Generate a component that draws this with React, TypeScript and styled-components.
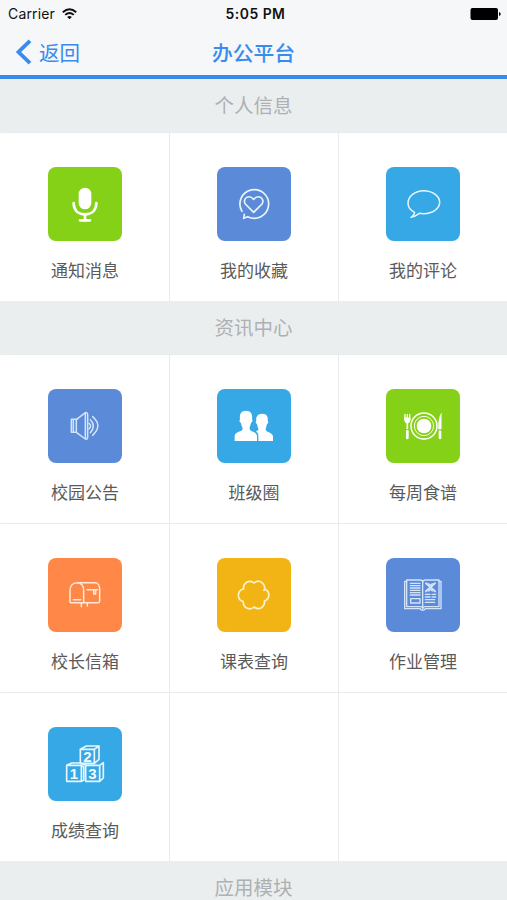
import React from "react";
import styled, { createGlobalStyle } from "styled-components";

const GlobalStyle = createGlobalStyle`
  * { box-sizing: border-box; }
  html, body { margin: 0; padding: 0; }
  body {
    background: #ffffff;
    overflow: hidden;
    font-family: "Noto Sans CJK SC", "Noto Sans", sans-serif;
  }
`;

const Screen = styled.div`
  width: 507px;
  height: 900px;
  overflow: hidden;
  background: #ffffff;
`;

const Header = styled.header`
  height: 79px;
  background: #f6f7f8;
  border-bottom: 4px solid #3b8ae6;
`;

const StatusBar = styled.div`
  height: 28px;
  display: grid;
  grid-template-columns: 1fr auto 1fr;
  align-items: center;
  padding: 0 6px 0 8px;
  color: #111111;
  font-family: Inter, sans-serif;
  line-height: 28px;
`;

const Carrier = styled.div`
  display: flex;
  align-items: center;
  gap: 7px;
  font-size: 14px;
  letter-spacing: 0.15px;
`;

const Clock = styled.div`
  font-size: 13.9px;
  font-weight: 600;
  letter-spacing: 0.5px;
  padding-left: 2px;
`;

const BatterySlot = styled.div`
  display: flex;
  justify-content: flex-end;
`;

const NavBar = styled.nav`
  height: 47px;
  display: grid;
  grid-template-columns: 1fr auto 1fr;
  align-items: center;
  padding: 0 15px;
  color: #3a8bee;
  line-height: 30px;
`;

const BackButton = styled.a`
  display: flex;
  align-items: center;
  gap: 7px;
  font-size: 20.5px;
`;

const Title = styled.h1`
  margin: 0;
  font-size: 20.8px;
  font-weight: 500;
  line-height: 30px;
`;

const SectionHeader = styled.h2`
  margin: 0;
  height: 53px;
  padding-top: 12px;
  background: #ebeeef;
  color: #aeb1b3;
  font-size: 19.5px;
  font-weight: 400;
  line-height: 28px;
  text-align: center;
`;

const Grid = styled.section`
  display: grid;
  grid-template-columns: repeat(3, 169px);
  grid-auto-rows: 169px;
`;

const Cell = styled.div`
  display: flex;
  flex-direction: column;
  align-items: center;
  padding-top: 34px;
  border-top: 1px solid #e8ebed;
  border-left: 1px solid #e8ebed;

  &:nth-child(3n + 1) {
    border-left-color: transparent;
  }
`;

const Tile = styled.div<{ $color: string }>`
  width: 74px;
  height: 74px;
  flex: none;
  border-radius: 8px;
  background: ${(p) => p.$color};

  svg {
    display: block;
    width: 74px;
    height: 74px;
    fill: none;
    stroke: #e9f5fd;
    stroke-width: 4.5;
    stroke-linecap: round;
    stroke-linejoin: round;
  }
`;

const Label = styled.div`
  margin-top: 16px;
  color: #5a5a5a;
  font-size: 17px;
  font-weight: 400;
  line-height: 26px;
  white-space: nowrap;
`;

const BlockDigit = styled.text`
  font-family: "Liberation Sans", sans-serif;
  font-size: 45px;
  font-weight: 700;
  fill: #f2faff;
  stroke: none;
`;

const Art = ({ children }: { children: React.ReactNode }) => (
  <svg viewBox="0 0 222 222">{children}</svg>
);

const MicIcon = () => (
  <Art>
    <rect x="92" y="62" width="38" height="65" rx="19" fill="#fff" stroke="none" />
    <path d="M77 108c0 23 15 34 34 34s34-11 34-34" stroke="#fff" strokeWidth="8" />
    <path d="M111 142v19M96 160h30" stroke="#fff" strokeWidth="8" />
  </Art>
);

const HeartIcon = () => (
  <Art>
    <path d="M75 133A43 43 0 1 1 92 149l-12 5 2-12" strokeWidth="5" />
    <path d="M110 136 85 111c-10-15 10-31 25-14 15-17 35-1 25 14Z" strokeWidth="5" />
  </Art>
);

const CommentIcon = () => (
  <Art>
    <path d="M75 151c7-5 10-9 11-15-13-6-20-16-20-27 0-21 21-38 47-38s48 16 48 35-21 34-48 34l-13-1c-8 6-16 10-25 12Z" />
  </Art>
);

const SpeakerIcon = () => (
  <Art>
    <g stroke="#d4e4fa">
      <path d="M70 91h15v39H70ZM76 94v33" />
      <path d="M85 92 112 71q7-1 7 6v67q0 8-7 6L85 130M112 74v73" />
      <path d="M123 103q10 8 0 17M127 92q18 19 0 39M134 83q31 27 0 56" />
    </g>
  </Art>
);

const PeopleIcon = () => (
  <Art>
    <g fill="#fff" stroke="none">
      <path d="M87 65c16 0 20 12 18 26 4 4 0 8-3 11-2 10-5 13-4 18 2 9 20 7 22 20v16H53v-16c2-13 22-11 24-20 0-5-4-9-5-18-4-3-6-7-3-11-2-14 2-26 18-26Z" />
      <path d="M136 74c14 0 18 10 16 22 4 4 1 7-2 9-2 9-4 12-4 17 3 9 20 7 22 20v14h-44v-17c-1-7-4-9-7-13 6-2 8-3 7-7-2-4-3-9-4-14-3-2-6-5-2-9-2-12 3-22 18-22Z" />
    </g>
  </Art>
);

const MealIcon = () => (
  <Art>
    <g stroke="#fff">
      <circle cx="114" cy="111" r="39" strokeWidth="4.5" />
      <circle cx="114" cy="111" r="29" strokeWidth="3" />
      <circle cx="114" cy="111" r="22" fill="#fff" stroke="none" />
      <path d="M57 76v17M64 76v17M71 76v17" strokeWidth="4" />
      <path d="M55 86h18q0 14-7 17v17h-4v-17q-7-3-7-17Z" fill="#fff" strokeWidth="1" />
      <path d="M64 126v21M162 128v19" strokeWidth="8" />
      <path d="M166 73c-7 9-9 28-9 47h9Z" fill="#fff" strokeWidth="1" />
    </g>
  </Art>
);

const MailboxIcon = () => (
  <Art>
    <g stroke="#ffead9" strokeWidth="4.5">
      <path d="M66 131V98c0-14 8-24 21-24h54c9 0 14 9 14 19v37q0 4-4 4H69q-3 0-3-3" />
      <path d="M87 74c14 0 20 10 20 24v36M76 125h22M117 95h31M137 96v12h6V95" />
      <path d="M100 134v12M118 134v10" />
    </g>
  </Art>
);

const FlowerIcon = () => (
  <Art>
    <path
      d="M147 95A19 19 0 0 1 142 129A19 19 0 0 1 111 147A19 19 0 0 1 79 134M78 130A19 19 0 0 1 80 93A19 19 0 0 1 111 75A19 19 0 0 1 141 97"
      stroke="#fff1cb"
      strokeWidth="5"
    />
  </Art>
);

const BookIcon = () => (
  <Art>
    <g stroke="#d4e4fa" strokeWidth="4">
      <path d="M62 70H56v82h46q3 5 8 5t8-5h47V70h-6" />
      <path d="M62 66h40q8 0 8 6 0-6 8-6h41v80h-41q-8 0-8 6 0-6-8-6H62Z" />
      <path d="M110 72v80M73 76h29M73 83h29M73 90h29M73 97h29M73 104h29M73 111h29" />
      <path d="M74 122h28v13H74ZM118 109h14M118 117h14M118 125h28M118 133h28M138 109h11M138 117h11" />
      <path d="M120 76l27 24M120 100l27-24" strokeWidth="6" />
      <path d="M128 77l5 5 6-5M128 99l5-5 6 5" />
    </g>
  </Art>
);

const BlocksIcon = () => (
  <Art>
    <path
      strokeWidth="5"
      d="M97 67h42v42H97ZM97 67l18-10h38l-14 10M153 57v40l-14 12M56 115h44v48H56ZM56 115l15-7h29M113 115h42v48h-42ZM102 110l11 5M155 115l11-8v46l-11 10M100 115l7 5v40l-7 3"
    />
    <BlockDigit x="106" y="106">2</BlockDigit>
    <BlockDigit x="65" y="157">1</BlockDigit>
    <BlockDigit x="121" y="157">3</BlockDigit>
  </Art>
);

const GREEN = "#84d118";
const INDIGO = "#5b8bd8";
const SKY = "#35a8e5";
const ORANGE = "#ff8848";
const YELLOW = "#f2b414";

type Item = { label: string; color: string; Icon: React.FC };

const personal: Item[] = [
  { label: "通知消息", color: GREEN, Icon: MicIcon },
  { label: "我的收藏", color: INDIGO, Icon: HeartIcon },
  { label: "我的评论", color: SKY, Icon: CommentIcon },
];

const news: Item[] = [
  { label: "校园公告", color: INDIGO, Icon: SpeakerIcon },
  { label: "班级圈", color: SKY, Icon: PeopleIcon },
  { label: "每周食谱", color: GREEN, Icon: MealIcon },
  { label: "校长信箱", color: ORANGE, Icon: MailboxIcon },
  { label: "课表查询", color: YELLOW, Icon: FlowerIcon },
  { label: "作业管理", color: INDIGO, Icon: BookIcon },
  { label: "成绩查询", color: SKY, Icon: BlocksIcon },
];

const ItemGrid = ({ items }: { items: Item[] }) => {
  const blanks = (3 - (items.length % 3)) % 3;
  return (
    <Grid>
      {items.map(({ label, color, Icon }) => (
        <Cell key={label}>
          <Tile $color={color}>
            <Icon />
          </Tile>
          <Label>{label}</Label>
        </Cell>
      ))}
      {Array.from({ length: blanks }, (_, i) => (
        <Cell key={`blank-${i}`} />
      ))}
    </Grid>
  );
};

export default function App() {
  return (
    <Screen>
      <GlobalStyle />
      <Header>
        <StatusBar>
          <Carrier>
            Carrier
            <svg width="15" height="12" viewBox="0 0 15 12" fill="none" stroke="#111" strokeWidth="1.9">
              <path d="M.8 4.3Q7.5-1.9 14.2 4.3M3.2 6.9q4.3-3.7 8.6 0" />
              <path d="M7.5 11.3 5.1 8.9q2.4-1.8 4.8 0Z" fill="#111" stroke="none" />
            </svg>
          </Carrier>
          <Clock>5:05 PM</Clock>
          <BatterySlot>
            <svg width="31" height="12" viewBox="0 0 31 12">
              <rect x=".5" y="0" width="27.5" height="12" rx="2" fill="#000" />
              <path d="M29 4q1.7.5 1.7 2T29 8Z" fill="#000" />
            </svg>
          </BatterySlot>
        </StatusBar>
        <NavBar>
          <BackButton>
            <svg width="17" height="26" viewBox="0 0 17 26" fill="none" stroke="#3a8bee" strokeWidth="3.8">
              <path d="M15 1.8 3.5 13 15 24.2" />
            </svg>
            返回
          </BackButton>
          <Title>办公平台</Title>
          <span />
        </NavBar>
      </Header>
      <SectionHeader>个人信息</SectionHeader>
      <ItemGrid items={personal} />
      <SectionHeader>资讯中心</SectionHeader>
      <ItemGrid items={news} />
      <SectionHeader>应用模块</SectionHeader>
    </Screen>
  );
}
